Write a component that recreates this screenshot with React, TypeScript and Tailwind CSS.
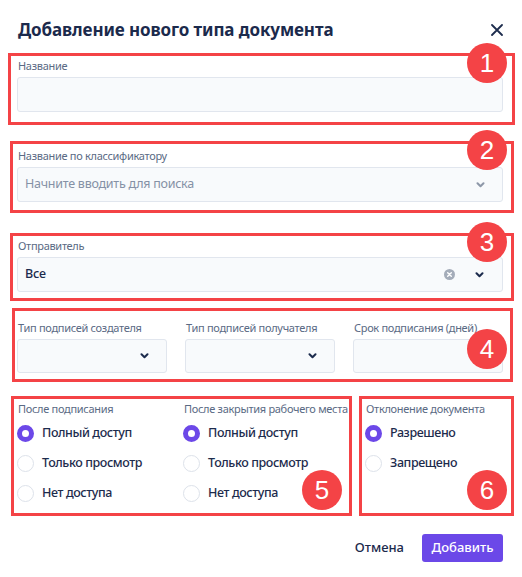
import React from 'react'

function Badge({ n, className }: { n: number; className: string }) {
    return (
        <div className={`absolute w-[40px] h-[40px] rounded-full bg-[#f44346] text-white flex items-center justify-center text-[26px] leading-none font-['Liberation_Sans',Arial,sans-serif] ${className}`}>
            {n}
        </div>
    )
}

function Chevron({ light }: { light?: boolean }) {
    return (
        <svg width="9" height="6" viewBox="0 0 9 6" fill="none">
            <path d="M1.5 1.3 4.5 4.3 7.5 1.3" stroke={light ? '#8d97a8' : '#1c2b4d'} strokeWidth="2" strokeLinecap="round" strokeLinejoin="round" />
        </svg>
    )
}

function Label({ children }: { children: React.ReactNode }) {
    return <div className="text-[11px] leading-[16px] tracking-[-0.3px] text-[#5a6a84] pl-[1px] whitespace-nowrap">{children}</div>
}

function Radio({ checked, label }: { checked?: boolean; label: string }) {
    return (
        <div className="h-[30px] flex items-center gap-[8px]">
            {checked ? (
                <span className="w-[17px] h-[17px] rounded-full border-[5px] border-[#6c48e8] bg-white box-border" />
            ) : (
                <span className="w-[17px] h-[17px] rounded-full border-[1.5px] border-[#dde2ea] bg-white box-border" />
            )}
            <span className="text-[12.5px] font-medium tracking-[-0.4px] text-[#1d2b4c] whitespace-nowrap">{label}</span>
        </div>
    )
}

export default function App() {
    return (
        <div className="w-[522px] h-[577px] bg-white font-['Noto_Sans',sans-serif] overflow-hidden">
            {/* Header */}
            <div className="h-[42px] pt-[18px] pl-[18px] pr-[19px] flex items-center justify-between">
                <h2 className="text-[17px] leading-[24px] font-bold tracking-[-0.1px] text-[#1b2a4c]">Добавление нового типа документа</h2>
                <svg width="12" height="12" viewBox="0 0 12 12" fill="none">
                    <path d="M1 1l10 10M11 1 1 11" stroke="#1e2d4e" strokeWidth="1.8" strokeLinecap="round" />
                </svg>
            </div>

            {/* 1 */}
            <div className="relative mt-[11px] ml-[8px] w-[507px] h-[72px] border-[3px] border-[#f44346] pt-[2px] pl-[6px] pr-[9px]">
                <Label>Название</Label>
                <div className="mt-[3px] h-[35px] rounded-[3px] border border-[#e1e6ee] bg-[#f8fafc]" />
                <Badge n={1} className="-top-[13px] right-[5px]" />
            </div>

            {/* 2 */}
            <div className="relative mt-[16px] ml-[10px] w-[504px] h-[72px] border-[3px] border-[#f44346] pt-[4px] pl-[4px] pr-[8px]">
                <Label>Название по классификатору</Label>
                <div className="mt-[3px] h-[35px] rounded-[3px] border border-[#e1e6ee] bg-[#f8fafc] flex items-center pl-[7px] pr-[17px]">
                    <span className="flex-1 text-[12.5px] tracking-[-0.25px] text-[#8591a6]">Начните вводить для поиска</span>
                    <Chevron light />
                </div>
                <Badge n={2} className="-top-[14px] right-[4px]" />
            </div>

            {/* 3 */}
            <div className="relative mt-[20px] ml-[10px] w-[504px] h-[68px] border-[3px] border-[#f44346] pt-[2px] pl-[4px] pr-[8px]">
                <Label>Отправитель</Label>
                <div className="mt-[3px] h-[35px] rounded-[3px] border border-[#e1e6ee] bg-[#f8fafc] flex items-center pl-[7px] pr-[18px]">
                    <span className="flex-1 text-[12.5px] font-medium tracking-[-0.2px] text-[#1b2a4c]">Все</span>
                    <svg width="11" height="11" viewBox="0 0 11 11" className="mr-[20px]">
                        <circle cx="5.5" cy="5.5" r="5.5" fill="#a4acb9" />
                        <path d="M3.7 3.7l3.6 3.6M7.3 3.7 3.7 7.3" stroke="#fff" strokeWidth="1.4" strokeLinecap="round" />
                    </svg>
                    <Chevron />
                </div>
                <Badge n={3} className="-top-[14px] right-[4px]" />
            </div>

            {/* 4 */}
            <div className="relative mt-[7px] ml-[12px] w-[501px] h-[74px] border-[3px] border-[#f44346] pt-[9px] pl-[2px] pr-[7px]">
                <div className="grid grid-cols-3 gap-x-[18px]">
                    <div>
                        <Label>Тип подписей создателя</Label>
                        <div className="mt-[3px] h-[34px] rounded-[3px] border border-[#e1e6ee] bg-[#f8fafc] flex items-center justify-end pr-[17px]">
                            <Chevron />
                        </div>
                    </div>
                    <div>
                        <Label>Тип подписей получателя</Label>
                        <div className="mt-[3px] h-[34px] rounded-[3px] border border-[#e1e6ee] bg-[#f8fafc] flex items-center justify-end pr-[17px]">
                            <Chevron />
                        </div>
                    </div>
                    <div>
                        <Label>Срок подписания (дней)</Label>
                        <div className="mt-[3px] h-[34px] rounded-[3px] border border-[#e1e6ee] bg-[#f8fafc]" />
                    </div>
                </div>
                <Badge n={4} className="top-[18px] right-[3px]" />
            </div>

            {/* 5 + 6 */}
            <div className="mt-[14px] flex">
                <div className="relative ml-[11px] w-[341px] h-[120px] border-[3px] border-[#f44346] pt-[2px] pl-[3px]">
                    <div className="grid grid-cols-[166px_1fr]">
                        <div>
                            <Label>После подписания</Label>
                            <div className="mt-[1px]">
                                <Radio checked label="Полный доступ" />
                                <Radio label="Только просмотр" />
                                <Radio label="Нет доступа" />
                            </div>
                        </div>
                        <div>
                            <Label>После закрытия рабочего места</Label>
                            <div className="mt-[1px]">
                                <Radio checked label="Полный доступ" />
                                <Radio label="Только просмотр" />
                                <Radio label="Нет доступа" />
                            </div>
                        </div>
                    </div>
                    <Badge n={5} className="top-[71px] right-[7px]" />
                </div>
                <div className="relative ml-[7px] w-[155px] h-[120px] border-[3px] border-[#f44346] pt-[2px] pl-[3px]">
                    <Label>Отклонение документа</Label>
                    <div className="mt-[1px]">
                        <Radio checked label="Разрешено" />
                        <Radio label="Запрещено" />
                    </div>
                    <Badge n={6} className="top-[71px] right-[4px]" />
                </div>
            </div>

            {/* Footer */}
            <div className="mt-[18px] pr-[19px] flex items-center justify-end gap-[18px]">
                <button className="text-[13px] font-medium text-[#1b2a4c]">Отмена</button>
                <button className="h-[28px] w-[81px] rounded-[3px] bg-[#6b48e8] text-white text-[13px] font-medium">Добавить</button>
            </div>
        </div>
    )
}
